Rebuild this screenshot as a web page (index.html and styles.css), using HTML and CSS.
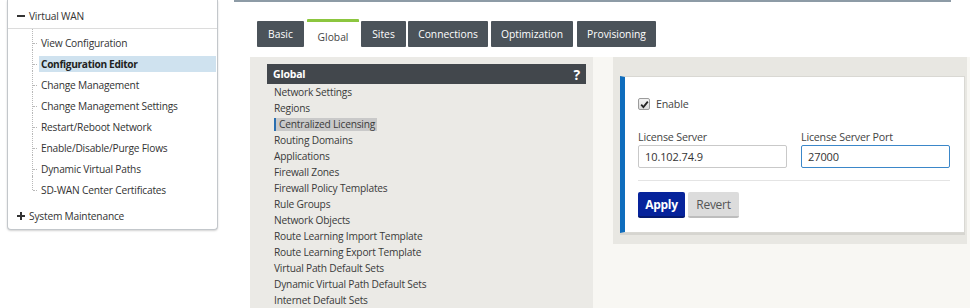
FILE: index.html
```html
<!DOCTYPE html>
<html>
<head>
<meta charset="utf-8">
<link rel="stylesheet" href="styles.css">
</head>
<body>
<div class="page">
  <aside class="sidebar">
    <div class="nav-box">
      <div class="nav-group"><span class="toggle minus"></span>Virtual WAN</div>
      <ul class="tree">
        <li>View Configuration</li>
        <li class="active">Configuration Editor</li>
        <li>Change Management</li>
        <li>Change Management Settings</li>
        <li>Restart/Reboot Network</li>
        <li>Enable/Disable/Purge Flows</li>
        <li>Dynamic Virtual Paths</li>
        <li>SD-WAN Center Certificates</li>
      </ul>
      <div class="nav-group last"><span class="toggle plus"></span>System Maintenance</div>
    </div>
  </aside>
  <main class="main">
    <div class="topline"></div>
    <nav class="tabs">
      <span class="tab w-basic">Basic</span>
      <span class="tab active w-global">Global</span>
      <span class="tab w-sites">Sites</span>
      <span class="tab w-conn">Connections</span>
      <span class="tab w-opt">Optimization</span>
      <span class="tab w-prov">Provisioning</span>
    </nav>
    <div class="content">
      <section class="list-panel">
        <div class="list-head"><span>Global</span><span class="help">?</span></div>
        <ul class="list">
          <li>Network Settings</li>
          <li>Regions</li>
          <li class="selected"><span>Centralized Licensing</span></li>
          <li>Routing Domains</li>
          <li>Applications</li>
          <li>Firewall Zones</li>
          <li>Firewall Policy Templates</li>
          <li>Rule Groups</li>
          <li>Network Objects</li>
          <li>Route Learning Import Template</li>
          <li>Route Learning Export Template</li>
          <li>Virtual Path Default Sets</li>
          <li>Dynamic Virtual Path Default Sets</li>
          <li>Internet Default Sets</li>
        </ul>
      </section>
      <section class="detail">
        <div class="card">
          <label class="check-row">
            <span class="checkbox"><svg width="9" height="9" viewBox="0 0 9 9"><path d="M1.2 4.6 L3.4 7 L7.8 1.6" fill="none" stroke="#222" stroke-width="1.8"/></svg></span>
            <span>Enable</span>
          </label>
          <div class="fields">
            <div class="field">
              <div class="field-label">License Server</div>
              <div class="input">10.102.74.9</div>
            </div>
            <div class="field">
              <div class="field-label">License Server Port</div>
              <div class="input focused">27000</div>
            </div>
          </div>
          <div class="sep"></div>
          <div class="buttons">
            <span class="btn primary">Apply</span>
            <span class="btn secondary">Revert</span>
          </div>
        </div>
      </section>
    </div>
  </main>
</div>
</body>
</html>
```

FILE: styles.css
```css
* { box-sizing: border-box; }
html, body { margin: 0; padding: 0; }
body {
  width: 970px;
  height: 308px;
  overflow: hidden;
  background: #fff;
  font-family: "Open Sans", "Noto Sans", sans-serif;
  color: #333;
}
ul { list-style: none; margin: 0; padding: 0; }

.page { display: flex; height: 308px; }

/* Sidebar */
.sidebar { width: 234px; flex: none; padding-left: 7px; }
.nav-box {
  width: 211px;
  border: 1px solid #c3c7cb;
  border-top: none;
  border-radius: 0 0 4px 4px;
  box-shadow: 0 1px 2px rgba(0,0,0,0.18);
  padding-bottom: 5px;
  background: #fff;
}
.nav-group {
  display: flex;
  align-items: center;
  height: 29px;
  padding: 4px 0 0 9px;
  font-size: 10.2px;
  letter-spacing: -0.2px;
  color: #333;
  border-bottom: 1px solid #dcdcdc;
}
.nav-group.last { border-bottom: none; height: 17px; padding-top: 0; }
.toggle { position: relative; width: 8px; height: 8px; margin-right: 4px; flex: none; }
.toggle::before {
  content: ""; position: absolute; left: 0; top: 3px; width: 8px; height: 2px; background: #333;
}
.toggle.plus::after {
  content: ""; position: absolute; left: 3px; top: 0; width: 2px; height: 8px; background: #333;
}
.tree { padding: 6px 0 4px 24px; }
.tree li {
  position: relative;
  height: 16px;
  line-height: 16px;
  margin: 0 1px 5px 7px;
  padding-left: 2px;
  font-size: 10.2px;
  letter-spacing: -0.2px;
  color: #333;
  white-space: nowrap;
}
.tree li::before {
  content: ""; position: absolute; left: -7px; top: -6px; height: 21px;
  border-left: 1px dotted #b8b8b8;
}
.tree li:last-child::before { height: 14px; }
.tree li::after {
  content: ""; position: absolute; left: -6px; top: 8px; width: 4px;
  border-top: 1px dotted #b8b8b8;
}
.tree li.active { background: #cfe2ef; font-weight: bold; color: #222; letter-spacing: -0.35px; }

/* Main */
.main { flex: 1; display: flex; flex-direction: column; }
.topline { width: 717px; border-top: 2px solid #8d9ba6; }
.tabs { display: flex; align-items: flex-start; padding: 17px 0 0 23px; height: 55px; gap: 2px; }
.tab {
  margin-top: 2px;
  height: 26px;
  background: #4b535a;
  color: #fff;
  font-size: 10.3px;
  display: flex;
  align-items: center;
  justify-content: center;
  border-radius: 1px;
}
.tab.active {
  margin-top: 0;
  height: 30px;
  background: #fff;
  color: #444;
  border-top: 3px solid #8cc63f;
  padding-top: 3px;
}
.w-basic { width: 47px; margin-right: 1px; }
.w-global { width: 52px; }
.w-sites { width: 45px; }
.w-conn { width: 80px; margin-right: 1px; }
.w-opt { width: 82px; margin-right: 2px; }
.w-prov { width: 79px; }

.content {
  flex: 1;
  display: flex;
  margin-left: 16px;
  background: #f8f7f3;
  align-items: flex-start;
}
.list-panel {
  width: 343px;
  align-self: stretch;
  background: #ebeae6;
  padding: 7px 7px 0 17px;
}
.list-head {
  height: 20px;
  background: #42474c;
  color: #fff;
  font-weight: bold;
  font-size: 10.5px;
  letter-spacing: -0.2px;
  display: flex;
  justify-content: space-between;
  align-items: center;
  padding: 0 6px;
}
.list-head .help { font-size: 14px; }
.list { padding-left: 7px; }
.list li {
  height: 16px;
  line-height: 16px;
  font-size: 10.2px;
  letter-spacing: -0.2px;
  color: #3a3a3a;
  white-space: nowrap;
}
.list li.selected span {
  display: inline-block;
  height: 13px;
  line-height: 13px;
  background: #c9c9c9;
  border-left: 2px solid #2a6fb0;
  padding: 0 2px 0 3px;
  margin-top: 1px;
}

.detail {
  margin-left: 20px;
  width: 354px;
  height: 187px;
  background: #e8e7e2;
  padding: 19px 2px 0 7px;
}
.card {
  height: 157px;
  background: #fff;
  border: 1px solid #d9d8d3;
  border-left: 5px solid #0f6dbd;
  box-shadow: 0 2px 0 #d6d5d0;
  padding: 19px 0 0 13px;
}
.check-row { display: flex; align-items: center; height: 16px; font-size: 10.7px; letter-spacing: -0.2px; color: #444; }
.checkbox {
  width: 12px; height: 12px; margin-right: 6px;
  border: 1px solid #9c9c9c; border-radius: 2px;
  background: linear-gradient(#f2f2f2, #dcdcdc);
  display: flex; align-items: center; justify-content: center;
}
.fields { display: flex; gap: 14px; margin-top: 17px; }
.field { width: 149px; }
.field-label { height: 16px; line-height: 16px; font-size: 10.7px; letter-spacing: -0.2px; color: #444; }
.input {
  height: 23px;
  border: 1px solid #c9c9c9;
  border-radius: 2px;
  padding-left: 6px;
  font-size: 11px;
  letter-spacing: -0.1px;
  line-height: 21px;
  color: #333;
}
.input.focused { border-color: #3b87c9; }
.sep { width: 312px; border-top: 1px solid #e4e4e4; margin-top: 12px; }
.buttons { display: flex; gap: 3px; margin-top: 11px; }
.btn {
  height: 26px;
  display: flex; align-items: center; justify-content: center;
  border-radius: 2px;
  font-size: 12px;
  letter-spacing: -0.3px;
}
.btn.primary { width: 47px; background: #06239b; color: #fff; font-weight: bold; border-bottom: 2px solid #041a70; }
.btn.secondary { width: 51px; background: #dcdcdc; color: #555; border-bottom: 2px solid #bdbdbd; }
```
